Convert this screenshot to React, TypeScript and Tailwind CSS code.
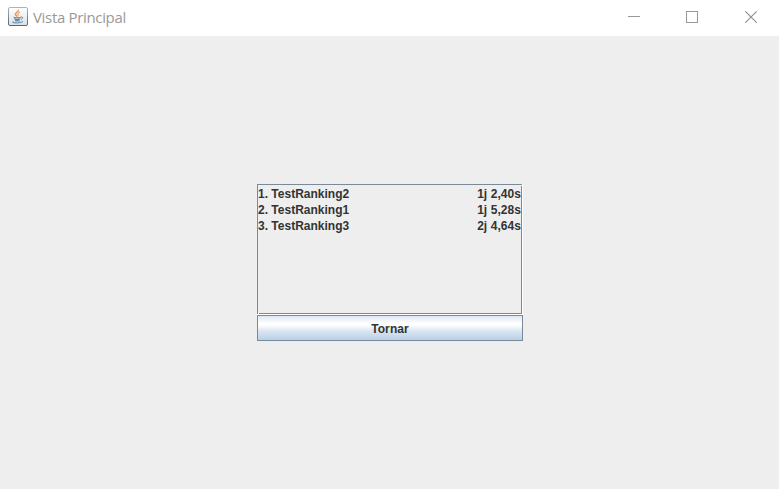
const rows = [
  { name: '1. TestRanking2', score: '1j 2,40s' },
  { name: '2. TestRanking1', score: '1j 5,28s' },
  { name: '3. TestRanking3', score: '2j 4,64s' },
];

function JavaIcon() {
  return (
    <svg width="20" height="20" viewBox="0 0 20 20" fill="none">
      <defs>
        <linearGradient id="tile" x1="0" y1="0" x2="0" y2="1">
          <stop offset="0" stopColor="#ffffff" />
          <stop offset="1" stopColor="#dce1e6" />
        </linearGradient>
        <linearGradient id="edge" x1="0" y1="0" x2="0" y2="1">
          <stop offset="0" stopColor="#a9b4bd" />
          <stop offset="1" stopColor="#50687a" />
        </linearGradient>
      </defs>
      <rect x="0.5" y="0.5" width="19" height="18" rx="1.5" fill="url(#tile)" stroke="url(#edge)" />
      <path d="M10.4 2.8C11 4.8 7 5.6 7.4 7.5C7.6 8.5 8.8 8.8 9.2 9.6" stroke="#ef9255" strokeWidth="1.5" />
      <path d="M12.2 5C10.1 5.9 9.3 6.7 10 7.8C10.4 8.4 10.3 8.9 9.9 9.4" stroke="#ef9255" strokeWidth="1" />
      <path d="M5.6 10.3C7.7 11.1 11 10.9 12.8 10.3M6.4 12C8 12.7 10.5 12.6 12 12M7 13.6C8.6 14.1 10.3 14 11.6 13.6" stroke="#6488a6" strokeWidth="1.3" />
      <path d="M13 10C15.4 9.7 15.3 11.8 12.8 12.6" stroke="#6488a6" />
      <path d="M4.4 14.6C5.5 16.3 12.8 16.2 15 14.6" stroke="#7c9bb5" strokeWidth="1.2" />
    </svg>
  );
}

export default function App() {
  return (
    <div className="flex h-[489px] w-[779px] flex-col overflow-hidden bg-[#eeeeee] font-['Liberation_Sans',Arial,sans-serif] text-[#333333]">
      <header className="flex h-9 shrink-0 items-start bg-white pl-2 text-[#999999]">
        <div className="mt-[7px]"><JavaIcon /></div>
        <h1 className="ml-[5px] mt-[7px] flex-1 whitespace-nowrap font-['Open_Sans','Noto_Sans',sans-serif] text-[15px] leading-5 tracking-[-0.33px]">Vista Principal</h1>
        <div className="mr-[22px] mt-[11px] flex gap-[46px]">
          <svg width="12" height="12" shapeRendering="crispEdges"><path d="M0 5.5H12" stroke="#999999" /></svg>
          <svg width="12" height="12" shapeRendering="crispEdges"><rect x="0.5" y="0.5" width="11" height="11" fill="none" stroke="#999999" /></svg>
          <svg className="ml-px" width="12" height="12"><path d="M0.3 0.3L11.7 11.7M11.7 0.3L0.3 11.7" stroke="#8c8c8c" strokeWidth="1.1" /></svg>
        </div>
      </header>
      <main className="ml-[257px] mt-[148px] w-[266px] text-xs font-bold">
        <div className="h-[131px] border-r border-b border-white">
          <div className="relative h-[130px] border border-[#7a8a99] pt-px">
            <i className="absolute -right-px top-0 size-px bg-white" />
            <i className="absolute -bottom-px left-0 size-px bg-white" />
            {rows.map((row) => (
              <div key={row.name} className="flex h-4 justify-between whitespace-nowrap leading-4">
                <span>{row.name}</span>
                <span className="tracking-[0.06px]">{row.score}</span>
              </div>
            ))}
          </div>
        </div>
        <button className="block h-[26px] w-full border border-[#7a8a99] bg-[linear-gradient(to_bottom,#dde8f3_0%,#ffffff_30%,#ffffff_38%,#dde8f3_60%,#b8cfe5_100%)] pt-0.5 text-center leading-[22px] tracking-[0.1px]">Tornar</button>
      </main>
    </div>
  );
}
